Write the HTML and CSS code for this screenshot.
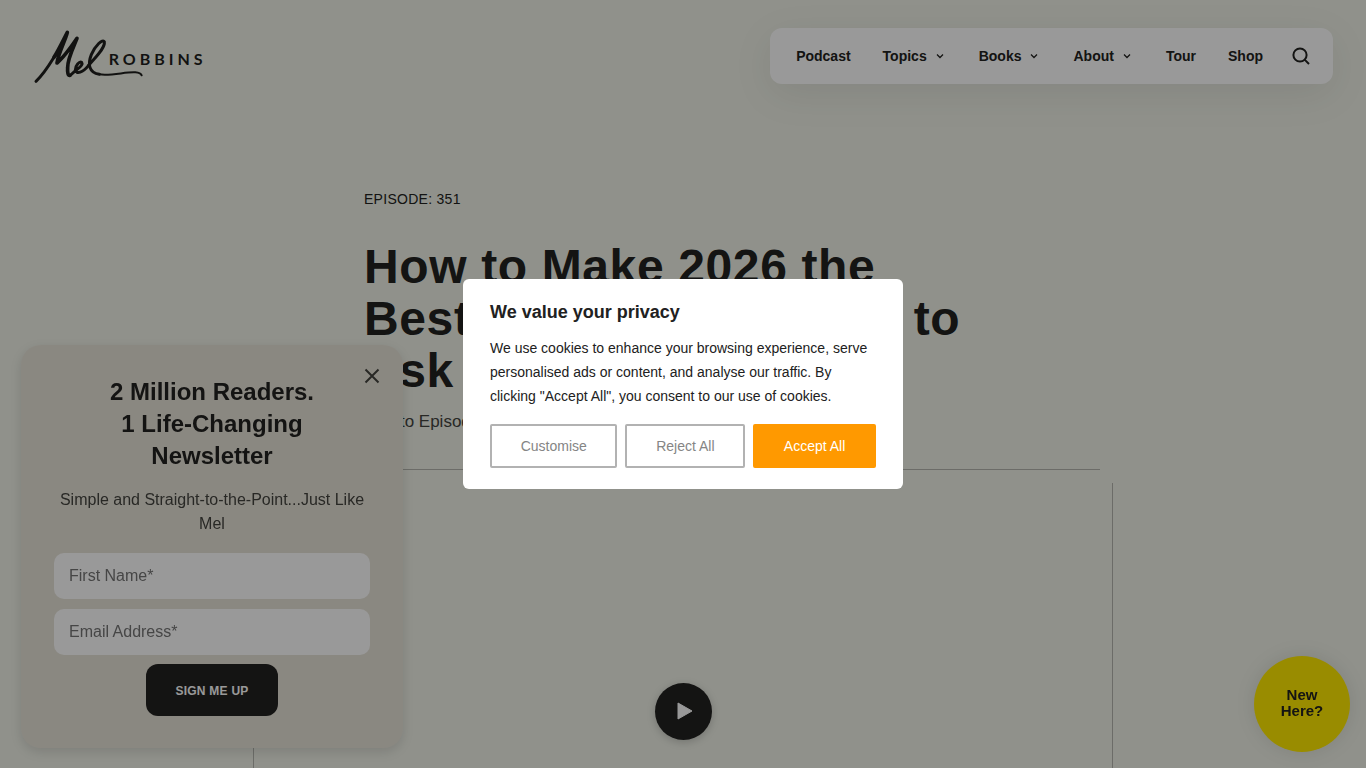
FILE: index.html
```html
<!DOCTYPE html>
<html lang="en">
<head>
    <meta charset="UTF-8">
    <meta name="viewport" content="width=device-width, initial-scale=1.0">
    <title>How to Make 2026 the Best Year - Mel Robbins</title>
    <link rel="stylesheet" href="styles.css">
</head>
<body>
    <header class="header">
        <a class="logo" href="/" aria-label="Mel Robbins">
            <svg viewBox="0 0 600 240" width="200" height="80" fill="none" stroke="#1f1f1d" stroke-linecap="round" stroke-linejoin="round">
                <path stroke-width="9" d="M48 196C66 180 86 150 102 124"/>
                <path stroke-width="11" d="M102 124C118 98 130 72 142 49C136 74 116 108 111 141C132 124 154 92 171 67C160 94 142 130 143 155C142 170 144 180 150 178"/>
                <path stroke-width="9" d="M150 178C157 175 160 168 170 161C180 154 189 145 185 139C179 134 165 149 166 162C169 176 188 170 206 148"/>
                <path stroke-width="9" d="M206 148C226 124 256 96 253 77C248 68 226 88 214 116C203 144 206 170 238 175"/>
                <path stroke-width="6" d="M238 175C274 180 318 167 346 169C358 170 363 173 365 178"/>
                <text class="logo-name" x="266" y="147" stroke="none">ROBBINS</text>
            </svg>
        </a>
        <nav class="nav">
            <a href="#">Podcast</a>
            <a href="#">Topics <svg viewBox="0 0 14 14"><path d="M4 5.5l3 3 3-3"/></svg></a>
            <a href="#">Books <svg viewBox="0 0 14 14"><path d="M4 5.5l3 3 3-3"/></svg></a>
            <a href="#">About <svg viewBox="0 0 14 14"><path d="M4 5.5l3 3 3-3"/></svg></a>
            <a href="#">Tour</a>
            <a href="#">Shop</a>
            <button class="search" aria-label="Search">
                <svg viewBox="0 0 18 18"><circle cx="8" cy="8" r="6.6"/><path d="M12.6 12.6l4.4 4.4"/></svg>
            </button>
        </nav>
    </header>

    <main>
        <section class="hero">
            <div class="hero-text">
                <p class="episode">EPISODE: 351</p>
                <h1>How to Make 2026 the Best Year: 7 Questions to Ask Yourself</h1>
                <a class="jump" href="#transcript">Link to Episode Transcript</a>
            </div>
        </section>
        <section class="video">
            <button class="play" aria-label="Play">
                <svg viewBox="0 0 16 18"><path d="M1 1l14 8-14 8z"/></svg>
            </button>
        </section>
    </main>

    <aside class="newsletter">
        <button class="close" aria-label="Close">
            <svg viewBox="0 0 16 16"><path d="M1.5 1.5l13 13M14.5 1.5l-13 13"/></svg>
        </button>
        <h2>2 Million Readers.<br>1 Life-Changing<br>Newsletter</h2>
        <p>Simple and Straight-to-the-Point...Just Like Mel</p>
        <form>
            <div class="fields">
                <input type="text" placeholder="First Name*" aria-label="First Name">
                <input type="email" placeholder="Email Address*" aria-label="Email Address">
            </div>
            <button class="submit" type="button">SIGN ME UP</button>
        </form>
    </aside>

    <a class="new-here" href="#">New<br>Here?</a>

    <div class="overlay">
        <div class="consent" role="dialog" aria-labelledby="consent-title">
            <h2 id="consent-title">We value your privacy</h2>
            <p>We use cookies to enhance your browsing experience, serve personalised ads or content, and analyse our traffic. By clicking "Accept All", you consent to our use of cookies.</p>
            <div class="consent-buttons">
                <button>Customise</button>
                <button>Reject All</button>
                <button class="accept">Accept All</button>
            </div>
        </div>
    </div>
</body>
</html>
```

FILE: styles.css
```css
* {
    box-sizing: border-box;
}

body {
    display: flex;
    flex-direction: column;
    margin: 0;
    height: 100vh;
    overflow: hidden;
    background: #f0f2e8;
    color: #222220;
    font-family: "Liberation Sans", Arial, sans-serif;
}

h1, h2, p {
    margin: 0;
}

a {
    color: inherit;
    text-decoration: none;
}

button, input {
    font-family: inherit;
}

button {
    cursor: pointer;
}

/* header */
.header {
    display: flex;
    justify-content: space-between;
    align-items: center;
    padding: 16px 33px 0 20px;
}

.logo svg {
    display: block;
}

.logo-name {
    font: bold 48px Lato, sans-serif;
    letter-spacing: 12px;
    fill: #1f1f1d;
}

.nav {
    display: flex;
    align-items: center;
    gap: 32px;
    height: 56px;
    padding: 0 23px 0 26px;
    border-radius: 12px;
    background: #fff;
    box-shadow: 0 10px 40px rgba(0, 0, 0, 0.08);
    font-size: 14px;
    font-weight: bold;
}

.nav a {
    display: flex;
    align-items: center;
    gap: 6px;
}

.nav a svg {
    width: 14px;
    height: 14px;
    fill: none;
    stroke: #222220;
    stroke-width: 1.3;
}

.search {
    display: flex;
    margin-left: -3px;
    padding: 0;
    border: 0;
    background: none;
}

.search svg {
    width: 18px;
    height: 18px;
    fill: none;
    stroke: #222220;
    stroke-width: 2;
}

/* episode */
.hero {
    max-width: 834px;
    margin: 94px auto 0;
    padding: 0 98px 36px;
    border-bottom: 1px solid #b4b5ae;
}

.hero-text {
    max-width: 620px;
}

.episode {
    font-size: 14px;
    line-height: 18px;
    letter-spacing: 0.02em;
}

h1 {
    margin: 33px 0 14px;
    font-size: 48px;
    line-height: 52px;
    letter-spacing: 0.013em;
}

.jump {
    display: block;
    font-size: 17px;
    line-height: 22px;
    color: #44443f;
}

.video {
    display: flex;
    justify-content: center;
    align-items: center;
    max-width: 860px;
    height: 456px;
    margin: 13px auto 0;
    border: solid #b4b5ae;
    border-width: 0 1px;
}

.play {
    display: flex;
    justify-content: center;
    align-items: center;
    width: 57px;
    height: 57px;
    padding: 0 0 0 4px;
    border: 0;
    border-radius: 50%;
    background: #222220;
    box-shadow: 0 2px 8px rgba(0, 0, 0, 0.2);
}

.play svg {
    width: 16px;
    height: 18px;
    fill: #fff;
    stroke: #fff;
    stroke-linejoin: round;
}

/* newsletter popup */
.newsletter {
    position: fixed;
    left: 21px;
    bottom: 20px;
    width: 382px;
    padding: 31px 33px 32px;
    border-radius: 20px;
    background: #e7e3d8;
    box-shadow: 0 4px 12px rgba(0, 0, 0, 0.12);
    text-align: center;
}

.newsletter h2 {
    font-size: 24px;
    line-height: 32px;
}

.newsletter p {
    margin: 16px 0 17px;
    font-size: 16px;
    line-height: 24px;
    color: #44443f;
}

.newsletter form {
    display: flex;
    flex-direction: column;
    align-items: center;
    gap: 9px;
}

.fields {
    display: flex;
    flex-direction: column;
    gap: 10px;
    width: 100%;
}

.newsletter input {
    width: 100%;
    height: 46px;
    padding: 0 15px;
    border: 0;
    border-radius: 10px;
    background: #fff;
    font-size: 16px;
}

.newsletter input::placeholder {
    color: #757575;
}

.submit {
    height: 52px;
    padding: 2px 29px 0;
    border: 0;
    border-radius: 12px;
    background: #222220;
    color: #fff;
    font-size: 12px;
    font-weight: bold;
    letter-spacing: 0.02em;
}

.close {
    position: absolute;
    top: 23px;
    right: 23px;
    display: flex;
    padding: 0;
    border: 0;
    background: none;
}

.close svg {
    width: 16px;
    height: 16px;
    fill: none;
    stroke: #44443f;
    stroke-width: 2;
}

.new-here {
    position: fixed;
    right: 16px;
    bottom: 16px;
    display: flex;
    justify-content: center;
    align-items: center;
    width: 96px;
    height: 96px;
    padding-bottom: 2px;
    border-radius: 50%;
    background: #ffe900;
    box-shadow: 0 0 20px rgba(0, 0, 0, 0.1);
    font-size: 15px;
    font-weight: bold;
    line-height: 16px;
    text-align: center;
}

/* cookie consent */
.overlay {
    position: fixed;
    inset: 0;
    display: flex;
    justify-content: center;
    align-items: center;
    background: rgba(0, 0, 0, 0.4);
}

.consent {
    width: 440px;
    padding: 21px 27px;
    border-radius: 6px;
    background: #fff;
    color: #212121;
}

.consent h2 {
    font-size: 18px;
    line-height: 24px;
}

.consent p {
    margin: 12px 0 16px;
    font-size: 14px;
    line-height: 24px;
}

.consent-buttons {
    display: flex;
    gap: 8px;
}

.consent-buttons button {
    flex: 1 1 auto;
    height: 44px;
    padding: 0 27px;
    border: 2px solid #b2b2b2;
    border-radius: 2px;
    background: #fff;
    color: #858585;
    font-size: 14px;
}

.consent-buttons .accept {
    border-color: #ff9900;
    background: #ff9900;
    color: #fff;
}
```
